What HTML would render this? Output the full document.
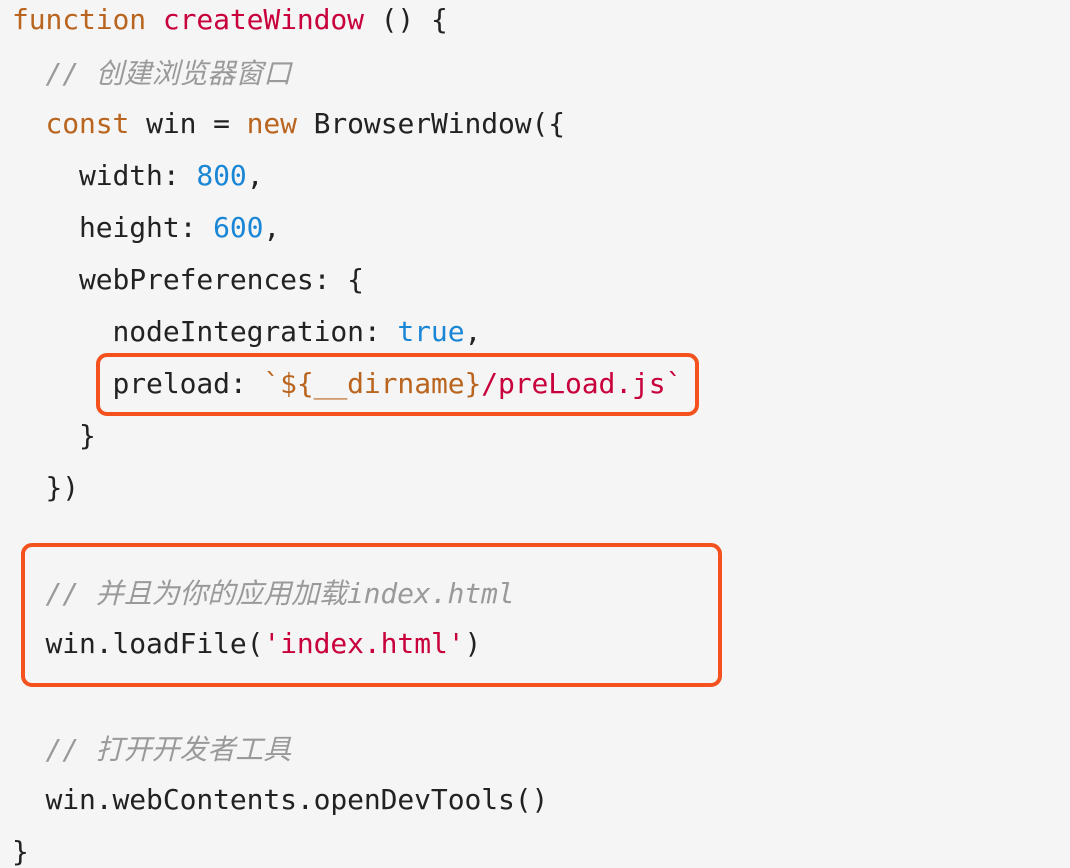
<!DOCTYPE html>
<html><head><meta charset="utf-8"><style>
html,body{margin:0;padding:0;background:#f5f5f5;width:1070px;height:868px;overflow:hidden;position:relative}
.l{position:absolute;left:12px;font-family:"DejaVu Sans Mono","Liberation Mono","Noto Sans CJK SC",monospace;font-size:28px;line-height:52px;height:52px;white-space:pre;color:#222;letter-spacing:-0.1px}
.k{color:#b9651f}.f{color:#c8003b}.n{color:#1a86d6}.c{color:#9a9a9a;font-style:italic}.s{color:#c8003b}
.c .z{font-family:"Noto Sans CJK SC",sans-serif;font-style:italic}
.box{position:absolute;border:4px solid #f4511e;border-radius:11px;box-sizing:border-box}
</style></head><body>
<div class="l" style="top:-6px"><span class="k">function</span> <span class="f">createWindow</span> () {</div>
<div class="l" style="top:46px">  <span class="c">// <span class="z">创建浏览器窗口</span></span></div>
<div class="l" style="top:98px">  <span class="k">const</span> win = <span class="k">new</span> BrowserWindow({</div>
<div class="l" style="top:150px">    width: <span class="n">800</span>,</div>
<div class="l" style="top:202px">    height: <span class="n">600</span>,</div>
<div class="l" style="top:254px">    webPreferences: {</div>
<div class="l" style="top:306px">      nodeIntegration: <span class="n">true</span>,</div>
<div class="l" style="top:358px">      preload: <span class="k">`${__dirname}</span><span class="s">/preLoad.js`</span></div>
<div class="l" style="top:410px">    }</div>
<div class="l" style="top:462px">  })</div>
<div class="l" style="top:566px">  <span class="c">// <span class="z">并且为你的应用加载</span>index.html</span></div>
<div class="l" style="top:618px">  win.loadFile(<span class="s">'index.html'</span>)</div>
<div class="l" style="top:722px">  <span class="c">// <span class="z">打开开发者工具</span></span></div>
<div class="l" style="top:774px">  win.webContents.openDevTools()</div>
<div class="l" style="top:826px">}</div>
<div class="box" style="left:96px;top:353px;width:603px;height:63px"></div>
<div class="box" style="left:21px;top:543px;width:701px;height:144px"></div>
</body></html>
